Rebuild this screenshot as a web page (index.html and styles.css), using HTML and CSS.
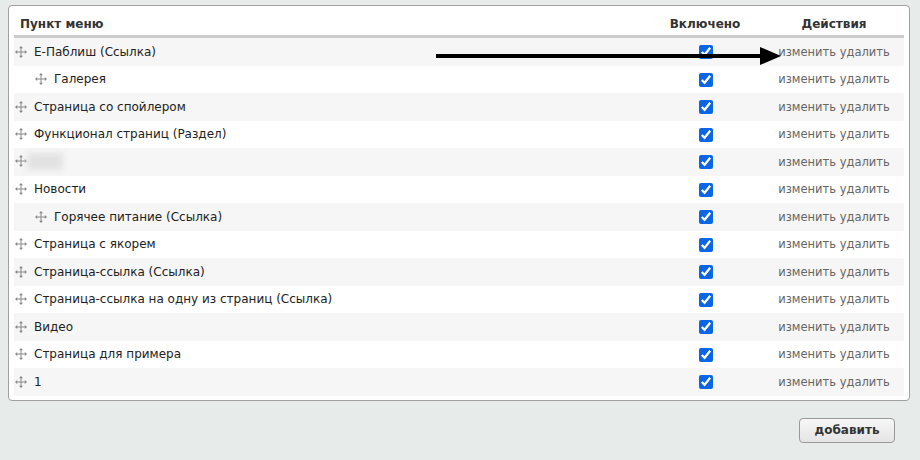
FILE: index.html
```html
<!DOCTYPE html>
<html lang="ru">
<head>
  <meta charset="UTF-8">
  <title>Пункты меню</title>
  <link rel="stylesheet" href="styles.css">
</head>
<body>
  <div class="panel">
    <table class="menu-table">
      <thead>
        <tr>
          <th class="col-title">Пункт меню</th>
          <th class="col-enabled">Включено</th>
          <th class="col-actions">Действия</th>
        </tr>
      </thead>
      <tbody>
        <tr><td><span class="drag"></span>Е-Паблиш (Ссылка)</td><td class="col-enabled"><input type="checkbox" checked></td><td class="col-actions"><a>изменить</a> <a>удалить</a></td></tr>
        <tr><td class="child"><span class="drag"></span>Галерея</td><td class="col-enabled"><input type="checkbox" checked></td><td class="col-actions"><a>изменить</a> <a>удалить</a></td></tr>
        <tr><td><span class="drag"></span>Страница со спойлером</td><td class="col-enabled"><input type="checkbox" checked></td><td class="col-actions"><a>изменить</a> <a>удалить</a></td></tr>
        <tr><td><span class="drag"></span>Функционал страниц (Раздел)</td><td class="col-enabled"><input type="checkbox" checked></td><td class="col-actions"><a>изменить</a> <a>удалить</a></td></tr>
        <tr><td><span class="drag"></span><span class="blurred"></span></td><td class="col-enabled"><input type="checkbox" checked></td><td class="col-actions"><a>изменить</a> <a>удалить</a></td></tr>
        <tr><td><span class="drag"></span>Новости</td><td class="col-enabled"><input type="checkbox" checked></td><td class="col-actions"><a>изменить</a> <a>удалить</a></td></tr>
        <tr><td class="child"><span class="drag"></span>Горячее питание (Ссылка)</td><td class="col-enabled"><input type="checkbox" checked></td><td class="col-actions"><a>изменить</a> <a>удалить</a></td></tr>
        <tr><td><span class="drag"></span>Страница с якорем</td><td class="col-enabled"><input type="checkbox" checked></td><td class="col-actions"><a>изменить</a> <a>удалить</a></td></tr>
        <tr><td><span class="drag"></span>Страница-ссылка (Ссылка)</td><td class="col-enabled"><input type="checkbox" checked></td><td class="col-actions"><a>изменить</a> <a>удалить</a></td></tr>
        <tr><td><span class="drag"></span>Страница-ссылка на одну из страниц (Ссылка)</td><td class="col-enabled"><input type="checkbox" checked></td><td class="col-actions"><a>изменить</a> <a>удалить</a></td></tr>
        <tr><td><span class="drag"></span>Видео</td><td class="col-enabled"><input type="checkbox" checked></td><td class="col-actions"><a>изменить</a> <a>удалить</a></td></tr>
        <tr><td><span class="drag"></span>Страница для примера</td><td class="col-enabled"><input type="checkbox" checked></td><td class="col-actions"><a>изменить</a> <a>удалить</a></td></tr>
        <tr><td><span class="drag"></span>1</td><td class="col-enabled"><input type="checkbox" checked></td><td class="col-actions"><a>изменить</a> <a>удалить</a></td></tr>
      </tbody>
    </table>

    <!-- annotation arrow over the first row -->
    <svg class="arrow" width="345" height="20" viewBox="0 0 345 20">
      <rect x="0" y="8" width="328" height="4" fill="#000"/>
      <polygon points="324,1 345,10 324,19" fill="#000"/>
    </svg>
  </div>

  <div class="footer">
    <button class="btn-add">добавить</button>
  </div>
</body>
</html>
```

FILE: styles.css
```css
/* Global */
body {
  margin: 0;
  padding: 5px 10px 0 8px;
  background: #e7ebea;
  font-family: "DejaVu Sans", Verdana, sans-serif;
  font-size: 12px;
  color: #222;
}

/* Panel */
.panel {
  position: relative;
  background: #fff;
  border: 1px solid #a0a0a0;
  border-radius: 4px;
  padding: 5px 5px 4px 5px;
}

.menu-table {
  width: 100%;
  border-collapse: collapse;
}
.menu-table th {
  font-weight: bold;
  color: #333;
  height: 22px;
  padding: 2px 0 0 0;
  border-bottom: 3px solid #ccc;
  vertical-align: middle;
}
.menu-table th.col-title {
  text-align: left;
  padding-left: 6px;
}
.menu-table td {
  height: 27.5px;
  padding: 0;
  vertical-align: middle;
}
.menu-table tbody tr:nth-child(odd) {
  background: #f6f6f6;
}

.col-enabled {
  width: 118px;
  text-align: center;
}
.col-actions {
  width: 140px;
  text-align: center;
  color: #666;
}
.menu-table td.col-actions {
  font-size: 11.5px;
}

.menu-table td.child {
  padding-left: 20px;
}

.drag {
  display: inline-block;
  width: 12px;
  height: 12px;
  margin: 0 7px 0 1px;
  vertical-align: -2px;
  background: url("data:image/svg+xml;utf8,<svg xmlns='http://www.w3.org/2000/svg' width='12' height='12' viewBox='0 0 12 12'><path d='M6 1.5V10.5M1.5 6H10.5' stroke='%23888' stroke-width='1'/><path d='M6 0L4 2.2H8ZM6 12L4 9.8H8ZM0 6L2.2 4V8ZM12 6L9.8 4V8Z' fill='%23888'/></svg>") no-repeat center;
}

.blurred {
  display: inline-block;
  width: 36px;
  height: 17px;
  vertical-align: middle;
  margin-left: -7px;
  background: #e2e2e2;
  filter: blur(3px);
}

input[type="checkbox"] {
  width: 14px;
  height: 14px;
  margin: 0 0 0 1px;
  vertical-align: middle;
  accent-color: #0a66e4;
}

.col-actions a {
  color: #666;
}

.arrow {
  position: absolute;
  left: 427px;
  top: 40px;
}

/* Footer */
.footer {
  display: flex;
  justify-content: flex-end;
  padding: 17px 15px 0 0;
}
.btn-add {
  font-family: "DejaVu Sans", Verdana, sans-serif;
  font-size: 12px;
  font-weight: bold;
  color: #333;
  width: 96px;
  height: 25px;
  border: 1px solid #999;
  border-radius: 4px;
  background: linear-gradient(#f7f7f7, #e4e4e4);
}
```
